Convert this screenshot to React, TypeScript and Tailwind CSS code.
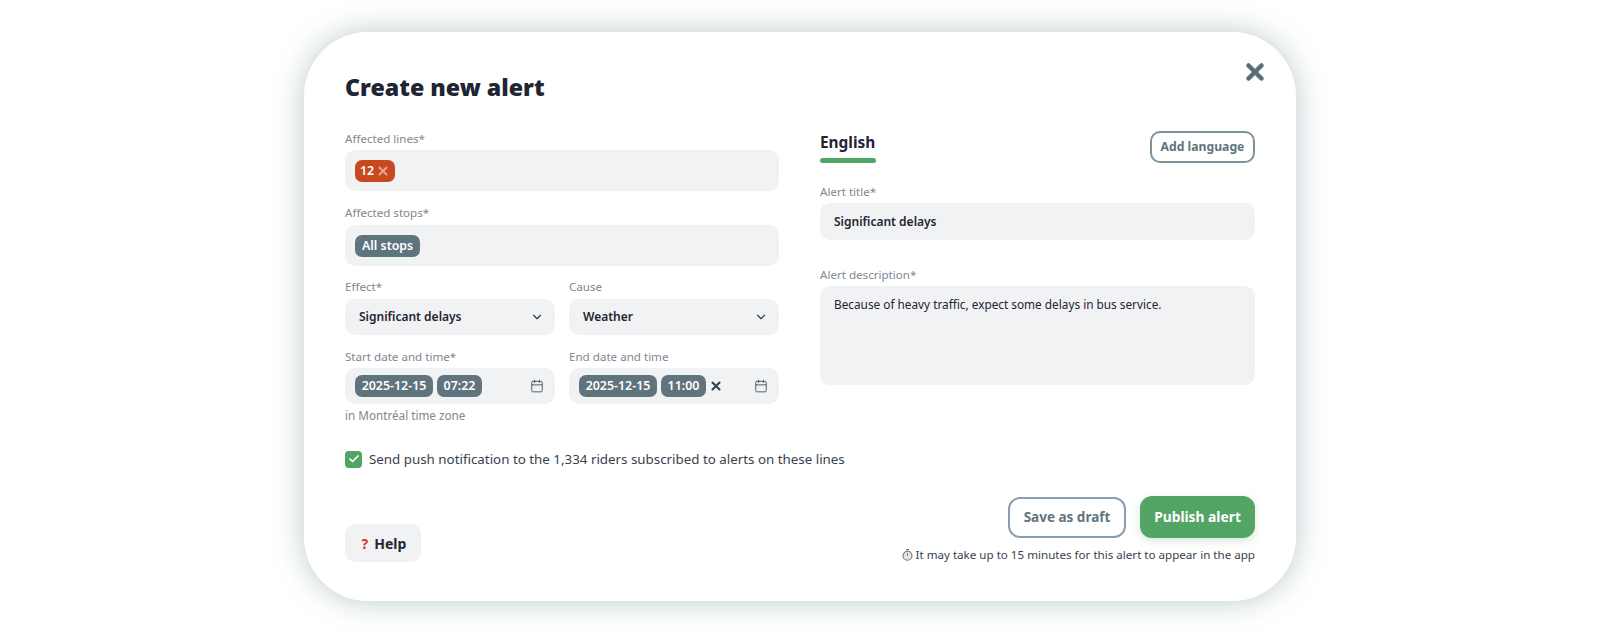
import React from "react";
import { Calendar, Check, ChevronDown, X } from "lucide-react";

const font = { fontFamily: '"Noto Sans", sans-serif' };

const Label = ({ children, className = "mb-[3px]" }: { children: React.ReactNode; className?: string }) => (
  <div className={`text-[11.6px] leading-[16px] text-[#7d8790] ${className}`}>{children}</div>
);

const Chip = ({ children, className = "" }: { children: React.ReactNode; className?: string }) => (
  <span className={`flex h-[22px] items-center whitespace-nowrap rounded-[7px] bg-[#5f747c] px-[7px] pt-[1px] text-[12.4px] font-semibold text-white ${className}`}>
    {children}
  </span>
);

const SelectField = ({ label, value }: { label: string; value: string }) => (
  <div className="w-[210px]">
    <Label className="mb-[4px]">{label}</Label>
    <div className="flex h-[36px] items-center justify-between rounded-[10px] bg-[#f1f2f4] pl-[14px] pr-[11px] text-[12px] font-semibold text-[#1f2532]">
      {value}
      <ChevronDown size={14} strokeWidth={2} className="text-[#2f3844]" />
    </div>
  </div>
);

const DateField = ({ label, date, time, clear }: { label: string; date: string; time: string; clear?: boolean }) => (
  <div className="w-[210px]">
    <Label>{label}</Label>
    <div className="flex h-[36px] items-center rounded-[10px] bg-[#f1f2f4] pl-[10px] pr-[11px]">
      <Chip className="w-[78px] justify-center">{date}</Chip>
      <Chip className="ml-[4px] w-[45px] justify-center">{time}</Chip>
      {clear && <X size={14} strokeWidth={3.6} className="ml-[3px] text-[#39454f]" />}
      <Calendar size={14} strokeWidth={1.6} className="ml-auto text-[#4a5560]" />
    </div>
  </div>
);

const App = () => {
  return (
    <div className="flex h-[634px] w-[1600px] justify-center overflow-hidden bg-white pt-[32px]" style={font}>
      <div className="relative h-[569px] w-[992px] rounded-[64px] bg-white px-[41px] pt-[36px] shadow-[0_0_30px_rgba(70,105,110,0.36)]">
        <button className="absolute right-[28px] top-[27px] text-[#5a6e78]">
          <X size={26} strokeWidth={4.2} />
        </button>

        <h1 className="text-[23.2px] font-black leading-[38px] text-[#1f2532]">Create new alert</h1>

        <div className="mt-[25px] flex gap-[41px]">
          <div className="w-[434px]">
            <Label>Affected lines*</Label>
            <div className="flex h-[41px] items-center rounded-[10px] bg-[#f1f2f4] px-[10px]">
              <span className="flex h-[22px] items-center gap-[2px] rounded-[7px] bg-[#c8491f] px-[5px] pt-[1px] text-[12.4px] font-semibold text-white">
                12
                <X size={14} strokeWidth={3.2} className="text-[#e8a48d]" />
              </span>
            </div>

            <div className="mt-[14px]">
              <Label className="mb-[4px]">Affected stops*</Label>
              <div className="flex h-[41px] items-center rounded-[10px] bg-[#f1f2f4] px-[10px]">
                <Chip>All stops</Chip>
              </div>
            </div>

            <div className="mt-[13px] flex justify-between">
              <SelectField label="Effect*" value="Significant delays" />
              <SelectField label="Cause" value="Weather" />
            </div>

            <div className="mt-[14px] flex justify-between">
              <DateField label="Start date and time*" date="2025-12-15" time="07:22" />
              <DateField label="End date and time" date="2025-12-15" time="11:00" clear />
            </div>

            <div className="mt-[3px] text-[11.7px] leading-[16px] text-[#7d8790]">in Montréal time zone</div>
          </div>

          <div className="w-[435px]">
            <div className="flex items-start justify-between">
              <div className="w-[56px] pt-[1px]">
                <div className="text-[15.4px] font-bold leading-[22px] text-[#1f2532]">English</div>
                <div className="mt-[4px] h-[5px] rounded-full bg-[#52a564]" />
              </div>
              <button className="flex h-[32px] w-[105px] items-center justify-center rounded-[10px] border-2 border-[#7f929c] text-[12.2px] font-bold text-[#5f747c]">
                Add language
              </button>
            </div>

            <div className="mt-[21px]">
              <Label>Alert title*</Label>
              <div className="flex h-[37px] items-center rounded-[10px] bg-[#f1f2f4] px-[14px] text-[12px] font-semibold text-[#1f2532]">
                Significant delays
              </div>
            </div>

            <div className="mt-[27px]">
              <Label>Alert description*</Label>
              <div className="h-[99px] rounded-[10px] bg-[#f1f2f4] px-[14px] py-[10px] text-[11.8px] leading-[16px] text-[#1f2532]">
                Because of heavy traffic, expect some delays in bus service.
              </div>
            </div>
          </div>
        </div>

        <div className="mt-[27px] flex items-center gap-[7px]">
          <span className="flex h-[17px] w-[17px] items-center justify-center rounded-[4px] bg-[#52a564]">
            <Check size={12} strokeWidth={3.5} className="text-white" />
          </span>
          <span className="text-[13.35px] leading-[18px] text-[#39424d]">
            Send push notification to the 1,334 riders subscribed to alerts on these lines
          </span>
        </div>

        <div className="mt-[28px] flex items-end justify-between">
          <button className="mb-[1px] flex h-[38px] w-[76px] items-center justify-center gap-[6px] rounded-[10px] bg-[#f1f2f4] pl-[2px] text-[14px] font-bold text-[#1f2532]">
            <span className="text-[#d23a2c]">?</span>
            Help
          </button>
          <div className="flex flex-col items-end">
            <div className="flex items-center gap-[14px]">
              <button className="flex h-[41px] w-[118px] items-center justify-center rounded-[12px] border-2 border-[#8c9cb0] text-[13.5px] font-bold text-[#5f747c]">
                Save as draft
              </button>
              <button className="flex h-[42px] w-[115px] items-center justify-center rounded-[12px] bg-[#52a564] text-[13.8px] font-bold text-white shadow-[0_3px_8px_rgba(82,165,100,0.25)]">
                Publish alert
              </button>
            </div>
            <div className="mt-[9px] flex items-center gap-[3px] text-[11.6px] leading-[16px] text-[#39424d]">
              <svg width="11" height="12" viewBox="0 0 11 12" fill="none">
                <rect x="4" y="0" width="3" height="1.2" fill="#6f777d" />
                <circle cx="5.5" cy="6.8" r="4.5" fill="#e3e5e6" stroke="#6f777d" strokeWidth="1.1" />
                <path d="M5.5 6.8V4.2" stroke="#6f777d" strokeWidth="1" />
              </svg>
              It may take up to 15 minutes for this alert to appear in the app
            </div>
          </div>
        </div>
      </div>
    </div>
  );
};

export default App;
